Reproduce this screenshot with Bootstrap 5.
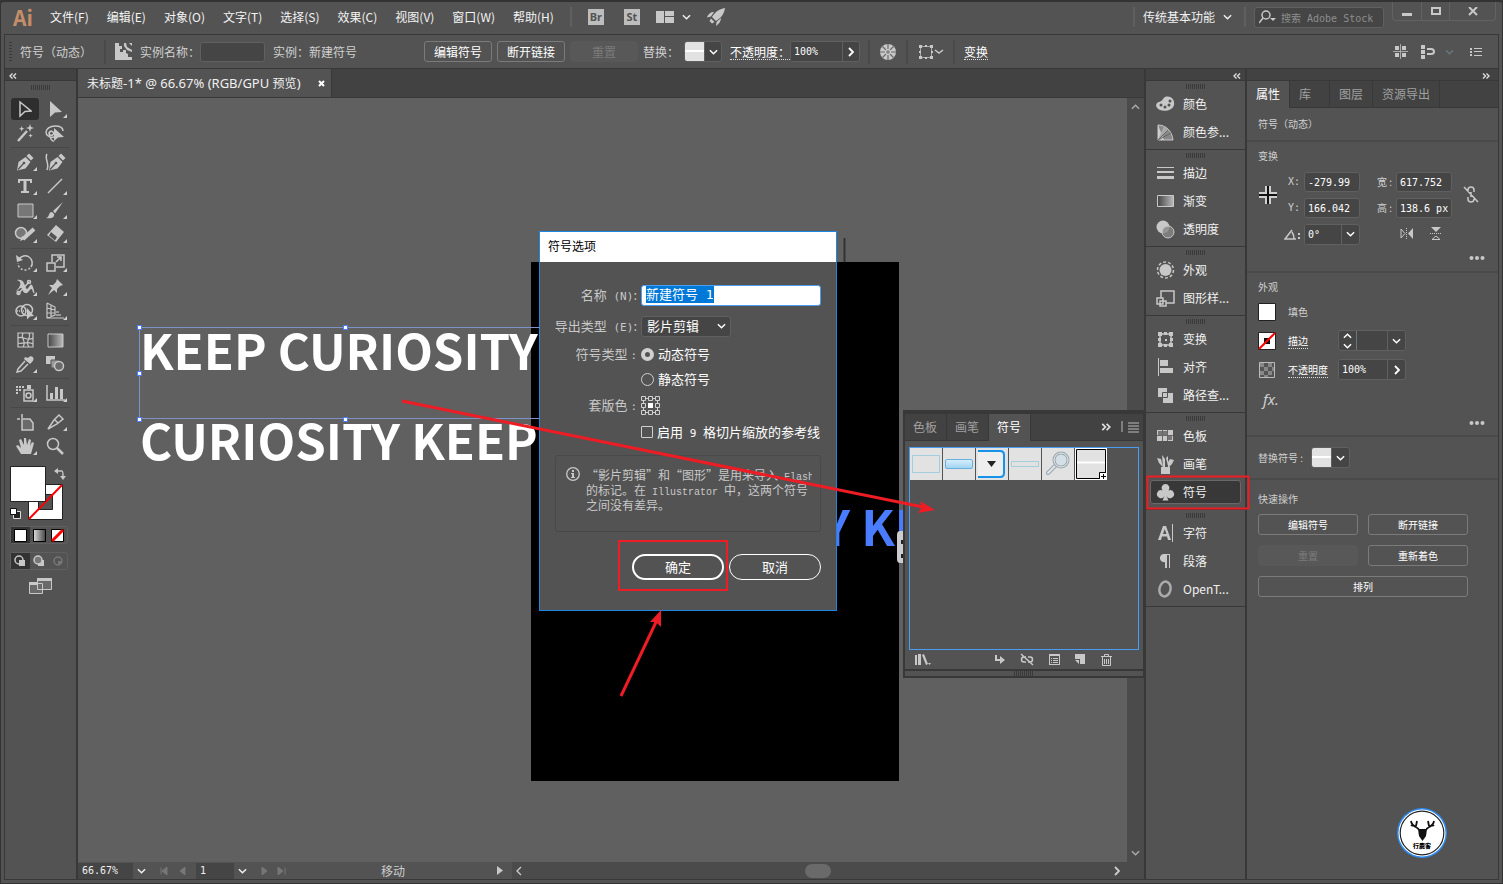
<!DOCTYPE html>
<html lang="zh-CN">
<head>
<meta charset="utf-8">
<meta name="viewport" content="width=device-width, initial-scale=1">
<title>未标题-1* @ 66.67% (RGB/GPU 预览)</title>
<link href="https://cdn.jsdelivr.net/npm/bootstrap@5.3.0/dist/css/bootstrap.min.css" rel="stylesheet">
<style>
:root{--ui:#535353;--dark:#424242;--line:#383838;--ico:#c8c8c8;--field:#454545;--edge:#606060;--red:#ee1c24}
body{font:12px/16px "Noto Sans CJK SC",sans-serif;color:#f0f0f0;background:var(--line);overflow:hidden}
button,input,select{font:inherit;color:inherit}
button{background:none;border:0;padding:0}
svg{display:block;flex:none}
.ic{fill:none;stroke:var(--ico);stroke-width:1.5}
.fi{fill:var(--ico);stroke:none}
.mono{font-family:"DejaVu Sans Mono",monospace;font-size:10px}
.half{font-family:"DejaVu Sans Mono",monospace;font-size:11px;line-height:0}
.half-s{font-family:"Liberation Mono",monospace;font-size:10px;line-height:0}
.lat{font-family:"Noto Sans",sans-serif;font-size:13px;line-height:0}
.app{min-height:100vh;background:var(--ui);border:1px solid #333;border-top-width:2px;border-radius:4px 4px 0 0}
.menubar{height:32px;padding:0 0 2px 12px}
.brand{color:#c58d68;font:bold 21px/28px "Noto Sans CJK SC",sans-serif;width:37px}
.menus{gap:18px}
.menus a{color:#f4f4f4;text-decoration:none}
.vsep{width:2px;height:20px;background:#5f5f5f}
.sqicon{width:16px;height:16px;background:#bdbdbd;color:#535353;font:bold 11px/16px "Noto Sans",sans-serif;text-align:center}
.search{width:130px;height:21px;background:var(--field);border:1px solid var(--edge);border-radius:3px;padding-left:4px}
.search input{width:100px;background:none;border:0;outline:0;padding:0}
.search input::placeholder{color:#8e8e8e;opacity:1;font-family:"DejaVu Sans Mono","Noto Sans CJK SC",monospace;font-size:10px}
.winbtns{border:1px solid #626262;border-top:0;border-radius:0 0 4px 4px;height:19px;margin-right:6px}
.winbtns button{width:28px;height:18px;display:grid;place-items:center}
.winbtns button+button{border-left:1px solid #626262}
.winbtns button:last-child{width:46px}
.frame{border:1px solid var(--line);margin:0 3px 3px 3px}
.ctrl{height:34px;border-bottom:1px solid var(--line);color:#d0d0d0;padding-left:4px}
.ctrl-name{width:92px}
.grip-v{width:3px;height:20px;background:repeating-linear-gradient(#3a3a3a 0 1px,transparent 1px 3px)}
.grip-h{width:20px;height:5px;background:repeating-linear-gradient(90deg,#3a3a3a 0 1px,transparent 1px 2px);margin:0 auto}
.fld{height:20px;background:var(--field);border:1px solid var(--edge);border-radius:3px;color:#fff;padding:0 3px;outline:0;min-width:0}
.obtn{height:21px;border:1px solid #7b7b7b;border-radius:3px;color:#fff;line-height:18px;text-align:center}
.obtn:disabled{border-color:#585858;background:#585858;color:#7a7a7a}
.ctrl .obtn{width:68px}
.ctrl-actions{gap:5px;margin-left:58px}
.combo{display:flex;align-items:center;border:1px solid var(--edge);border-radius:3px;background:var(--field);height:21px;overflow:hidden}
.combo .fld{border:0;border-radius:0;flex:1;height:19px}
.combo .arr{width:18px;height:19px;display:grid;place-items:center;border-left:1px solid var(--edge);flex:none}
.ctrl .combo .arr{width:17px}
.thumb{width:19px;height:19px;background:linear-gradient(#e2e2e2 8px,#fff 8px 10px,#e2e2e2 10px);flex:none}
.dotted{border-bottom:1px dotted #ddd;color:#fff;line-height:15px}
.seg{height:24px;display:flex;align-items:center;border-left:2px solid #4a4a4a;padding:0 9px}
.strip{height:12px;background:var(--dark);border-bottom:1px solid var(--line)}
.toolbox{width:73px;border-right:2px solid var(--line)}
.toolbox .grip-h{margin:4px auto 7px}
.tgrid{display:grid;grid-template-columns:30px 30px;grid-auto-rows:24px;justify-content:center;width:60px;margin:0 0 0 5px}
.tgrid+.tgrid{margin-top:5px;position:relative}
.tgrid+.tgrid::before{content:"";position:absolute;left:0;right:0;top:-3px;height:1px;background:#494949}
.tgrid button{display:grid;place-items:center;position:relative;border-radius:3px}
.tgrid .on{background:#2e2e2e;margin:1px}
.tgrid .sub::after{content:"";position:absolute;right:3px;bottom:3px;border:2px solid;border-color:transparent #d0d0d0 #d0d0d0 transparent}
.modes{width:58px;height:18px;margin-left:5px;border:1px solid #606060;border-radius:3px}
.modes button{flex:1;display:grid;place-items:center}
.modes .on{background:#333}
.doc{position:relative;min-width:0}
.doctabs{height:29px;background:var(--dark);border-bottom:1px solid var(--line)}
.doctab{width:254px;background:var(--ui);border-right:1px solid var(--line);padding:0 6px 0 9px}
.canvas{background:#606060;overflow:hidden}
.artboard{position:absolute;left:453px;top:193px;width:368px;height:519px;background:#000}
.headline{position:absolute;font:bold 49px/60px "Noto Sans CJK SC",sans-serif;color:#fff;white-space:nowrap}
.vbar{width:17px;background:#4b4b4b;padding:6px 4px;color:#aaa}
.status{height:17px;background:var(--ui)}
.status select{height:16px;background:var(--field);border:0;outline:0;appearance:none;padding:0 4px}
.overlay{position:absolute;left:0;top:0;width:100%;height:100%;pointer-events:none;z-index:9;overflow:visible}
.dlg{position:absolute;left:461px;top:162px;width:298px;background:var(--ui);border:1px solid #1c86e0;z-index:5;color:#c8c8c8;font-size:13px}
.dlg header{height:30px;background:#fff;color:#000;font-size:12px;padding:6px 8px}
.dgrid{display:grid;grid-template-columns:97px 1fr;column-gap:4px;grid-template-rows:30px 32px 24px 26px 26px 28px;align-items:center;padding:18px 15px 0 0}
.dgrid>.lab{text-align:right;grid-column:1}
.dgrid>.val{grid-column:2;color:#fff;display:flex;align-items:center;gap:4px}
.namebox{height:21px;width:100%;border:1px solid #4a9df0;border-radius:3px;background:#fff;color:#000;padding:0 4px 4px;outline:0;font:13px/15px "DejaVu Sans Mono","Noto Sans CJK SC",monospace}
.namebox::selection{background:#0078d7;color:#fff}
.dlg input[type=radio]{appearance:none;width:13px;height:13px;border:1px solid #d0d0d0;border-radius:50%;margin:0}
.dlg input[type=radio]:checked{background:#535353;border:4px solid #d0d0d0}
.dlg input[type=checkbox]{appearance:none;width:12px;height:12px;border:1px solid #d0d0d0;border-radius:1px;margin:0}
.dlg select{appearance:none;background:none;border:0;width:88px;padding:0 5px;height:19px;outline:0}
.info{margin:9px 15px 22px;border:1px solid #494949;border-radius:3px;height:77px;padding:11px 8px 0 10px;font-size:12px;line-height:15px;gap:6px}
.dlg-foot{padding:0 15px 30px 0;gap:5px}
.pill{width:92px;height:26px;border:1px solid #fff;border-radius:13px;color:#fff}
.pill.main{border-width:2px}
.floatp{position:absolute;right:-1px;top:341px;width:242px;height:268px;background:var(--ui);border:2px solid var(--line);border-top-width:4px;z-index:6}
.ptabs{height:27px;background:var(--dark);border-bottom:1px solid var(--line)}
.ptabs button{color:#a0a0a0;border-right:1px solid var(--line);padding:0 9px 0 8px}
.ptabs .on{background:var(--ui);color:#fff;height:27px}
.symbols{margin:6px 4px 0;height:203px;border:1px solid #4a9df0;gap:1px;align-items:flex-start}
.symbols button{width:32px;height:32px;background:#e2e2e2}
.floatp-foot{padding:0 31px 0 10px}
.dock{width:103px;border-left:2px solid var(--line);border-right:2px solid var(--line)}
.dgroup{border-bottom:1px solid var(--line);padding:3px 4px 3px 4px}
.dgroup button{display:flex;align-items:center;width:91px;height:28px;padding-left:6px;gap:8px;white-space:nowrap}
.dgroup .grip-h{margin-bottom:1px}
.dgroup .on{background:#383838;border:1px solid #686868;border-radius:3px;height:24px;margin:2px 0;padding-left:5px}
.props{width:251px;font-size:10px;color:#d0d0d0}
.props .ptabs{font-size:12px}
.props .ptabs button{padding:0 9px}
.props .ptabs .wide{padding-right:18px}
.sec{padding:6px 11px 0 11px;border-bottom:2px solid #4a4a4a}
.xform{display:grid;grid-template-columns:20px 18px 56px 28px 56px 30px;grid-auto-rows:20px;gap:6px 4px;align-items:center;justify-items:end}
.xform .fld,.xform .combo{width:56px}
.more{margin:12px 2px 0 auto}
.rows{display:grid;grid-template-columns:30px 50px 68px;grid-auto-rows:29px;align-items:center;margin-top:2px}
.rows a{justify-self:start;white-space:nowrap}
.fx{font:italic 15px "Noto Sans",sans-serif;padding-left:5px}
.more.low{margin-top:8px}
.qgrid{display:grid;grid-template-columns:100px 100px;gap:10px}
.qgrid .all{grid-column:span 2}
.avatar{position:absolute;right:55px;bottom:25px}
.flip{transform:rotate(180deg)}
</style>
</head>
<body>
<svg width="0" height="0" class="position-absolute" aria-hidden="true">
<symbol id="dn" viewBox="0 0 10 6"><path d="M1 1l4 4 4-4" fill="none" stroke="currentColor" stroke-width="1.6"/></symbol>
<symbol id="rt" viewBox="0 0 6 10"><path d="M1 1l4 4-4 4" fill="none" stroke="currentColor" stroke-width="1.8"/></symbol>
<symbol id="lt" viewBox="0 0 6 10"><path d="M5 1L1 5l4 4" fill="none" stroke="currentColor" stroke-width="1.3"/></symbol>
<symbol id="ll" viewBox="0 0 8 6"><path d="M3.500 .5L1 3l2.500 2.500M7 .5L4.500 3 7 5.500" fill="none" stroke="#ddd" stroke-width="1.4"/></symbol>
<symbol id="rr" viewBox="0 0 8 6"><path d="M1 .5L3.500 3 1 5.500M4.500 .5L7 3 4.500 5.500" fill="none" stroke="#ddd" stroke-width="1.4"/></symbol>
<symbol id="nib" viewBox="2 1 17 18"><path d="M2 18.500l1.500-8.500 7-5 5 5-5 6.500zM11.500 4l2.500-2.500 4.500 4.500L16 8.500z" fill="#c8c8c8"/><path d="M3 17.500l5.500-6" stroke="#535353" stroke-width="1.200"/><circle cx="9" cy="11" r="1.300" fill="#535353"/></symbol>
<symbol id="dots3" viewBox="0 0 16 4"><circle cx="2.500" cy="2" r="2"/><circle cx="8" cy="2" r="2"/><circle cx="13.500" cy="2" r="2"/></symbol>
</svg>
<div class="app d-flex flex-column position-relative">
<header class="menubar d-flex align-items-center">
  <div class="brand">Ai</div>
  <nav class="menus d-flex"><a href="#">文件(F)</a><a href="#">编辑(E)</a><a href="#">对象(O)</a><a href="#">文字(T)</a><a href="#">选择(S)</a><a href="#">效果(C)</a><a href="#">视图(V)</a><a href="#">窗口(W)</a><a href="#">帮助(H)</a></nav>
  <div class="d-flex align-items-center gap-3 ps-3">
    <span class="vsep"></span>
    <div class="d-flex align-items-center gap-3">
      <button class="sqicon">Br</button><button class="sqicon ms-1">St</button>
      <button class="d-flex align-items-center gap-2" aria-label="排列文档"><svg width="18" height="12"><path class="fi" d="M0 0h8v12H0zM9 0h9v5H9zM9 6h9v6H9z"/></svg><svg width="9" height="6"><use href="#dn"/></svg></button>
      <button aria-label="GPU"><svg width="18" height="18" viewBox="0 0 18 18"><path class="fi" d="M18 0C12 1 8 4 5 9l4 4c5-3 8-7 9-13zM7 4C4 4 1 6 0 9.500l4-1zM14 10c0 3-2 6-5 8l.5-4zM4 10.500l3.500 3.500L5 15.500 2.500 13z"/></svg></button>
    </div>
  </div>
  <div class="ms-auto d-flex align-items-center gap-2 h-100">
    <span class="vsep"></span>
    <button class="d-flex align-items-center gap-2">传统基本功能<svg width="9" height="6"><use href="#dn"/></svg></button>
    <span class="vsep ms-1"></span>
    <label class="search d-flex align-items-center gap-1"><svg width="18" height="14" viewBox="0 0 18 14"><circle class="ic" cx="7" cy="5" r="4"/><path class="ic" d="M4 8l-4 5"/><path class="fi" d="M11 8h6l-3 3z"/></svg><input type="text" placeholder="搜索 Adobe Stock" aria-label="搜索"></label>
    <div class="winbtns d-flex align-self-start"><button aria-label="最小化"><svg width="10" height="12"><path class="fi" d="M0 8h10v3H0z"/></svg></button><button aria-label="最大化"><svg width="10" height="8"><path fill="none" stroke="#c8c8c8" stroke-width="2" d="M1 1h8v6H1z"/></svg></button><button aria-label="关闭"><svg width="10" height="9"><path d="M1 0l8 8M9 0L1 8" stroke="#c8c8c8" stroke-width="2"/></svg></button></div>
  </div>
</header>
<div class="frame d-flex flex-column flex-grow-1">
<section class="ctrl d-flex align-items-center">
  <span class="grip-v"></span><span class="ctrl-name ps-2">符号（动态）</span>
  <div class="seg gap-2"><svg width="17" height="17" viewBox="0 0 17 17"><path class="fi" d="M0 0h4v3l3 0v3H5v3h3V7h3v3l2 1v3h4v3H0zM9 0h2l1 4 5 3v2l-5-2-3-4zM14 0h3v3z"/></svg>
  <label class="d-flex align-items-center">实例名称：<input class="fld" style="width:65px"></label><span>实例：新建符号</span></div>
  <div class="ctrl-actions d-flex align-items-center"><button class="obtn">编辑符号</button><button class="obtn">断开链接</button><button class="obtn" disabled>重置</button>
  <span>替换：</span><button class="combo text-white" aria-label="替换符号"><span class="thumb"></span><span class="arr"><svg width="9" height="6"><use href="#dn"/></svg></span></button></div>
  <div class="d-flex align-items-center px-2"><a href="#" class="dotted text-decoration-none">不透明度：</a><div class="combo" style="width:70px"><input class="fld mono" value="100%" aria-label="不透明度"><span class="arr text-white"><svg width="6" height="10"><use href="#rt"/></svg></span></div></div>
  <div class="seg"><svg width="18" height="18" viewBox="0 0 18 18"><circle cx="9" cy="9" r="8" fill="#c8c8c8"/><path d="M9 1v16M1 9h16M3.500 3.500l11 11M14.500 3.500l-11 11" stroke="#6a6a6a" stroke-width="1.200"/><circle cx="9" cy="9" r="2.500" fill="#888" stroke="#e0e0e0"/></svg></div>
  <div class="seg"><svg width="27" height="16" viewBox="0 0 27 16"><path d="M3.500 2.500h11v11h-11z" fill="none" stroke="#aaa"/><path class="fi" d="M2 1h3v3H2zM8 1h2v2H8zM13 1h3v3h-3zM2 7h2v2H2zM14 7h2v2h-2zM2 12h3v3H2zM8 13h2v2H8zM13 12h3v3h-3z"/><path d="M18 6l4 3 4-3" class="ic"/></svg></div>
  <div class="seg"><a href="#" class="dotted text-decoration-none">变换</a></div>
  <div class="ms-auto d-flex align-items-center gap-2 pe-3"><svg width="16" height="16"><path class="fi" d="M2 2h4v4H2zM9 2h4v4H9zM2 9h4v4H2zM9 9h4v4H9z"/><path d="M7.500 0v15M0 7.500h15" stroke="#aaa"/></svg><svg class="ms-1" width="16" height="16"><path class="fi" d="M0 1h4v4H0zM0 6h4v4H0zM0 11h4v4H0z"/><path d="M6 5h4a3 2.500 0 0 1 0 5H6" fill="none" stroke="#c8c8c8" stroke-width="2"/></svg><svg width="9" height="6" class="text-secondary"><use href="#dn"/></svg><svg class="ms-2" width="12" height="10"><path class="fi" d="M0 1h2v2H0zM0 4h2v2H0zM0 7h2v2H0zM4 1h8v1H4zM4 4h8v1H4zM4 8h8v1H4z"/></svg></div>
</section>
<div class="d-flex flex-grow-1">
<aside class="toolbox">
  <div class="strip ps-1 pt-1"><svg width="8" height="6"><use href="#ll"/></svg></div>
  <div class="grip-h"></div>
  <div class="tgrid">
    <button class="on" aria-label="选择"><svg width="13" height="18" viewBox="0 0 13 18"><path class="ic" d="M1 2l11 9-6 .5L1 16z"/></svg></button>
    <button class="sub" aria-label="直接选择"><svg width="13" height="18" viewBox="0 0 13 18"><path class="fi" d="M1 1l12 11-7 .5L1 17z"/></svg></button>
    <button aria-label="魔棒"><svg width="18" height="18" viewBox="0 0 18 18"><path d="M2 17L11 7" stroke="#c8c8c8" stroke-width="2.500"/><path class="fi" d="M13 3l1-3 1 3 3 1-3 1-1 3-1-3-3-1zM5 4l.7-2 .7 2 2 .7-2 .7-.7 2-.7-2-2-.7zM14 11l.6-1.600.6 1.600 1.600.6-1.600.6-.6 1.600-.6-1.600-1.600-.6z"/></svg></button>
    <button aria-label="套索"><svg width="20" height="18" viewBox="0 0 20 18"><path class="ic" d="M9 13c-5 1-8-2-8-5s4-6 9-6 8 2 8 5M7 7c-3 0-4 3-2 4s5-1 3-3-5 0-3 5 4 4 4 4"/><path class="fi" d="M9 4l10 9-6 .5-4 3.500z"/></svg></button>
  </div>
  <div class="tgrid">
    <button class="sub" aria-label="钢笔"><svg width="17" height="18"><use href="#nib"/></svg></button>
    <button aria-label="曲率"><svg width="21" height="18"><path class="ic" d="M2 1C-1 6 5 10 2 17"/><use href="#nib" x="4" width="17" height="18"/></svg></button>
    <button class="sub" aria-label="文字"><svg width="16" height="16"><path class="fi" d="M1 1h14v4h-2V3H9.500v10H12v2H4v-2h2.500V3H3v2H1z"/></svg></button>
    <button class="sub" aria-label="直线"><svg width="16" height="16"><path class="ic" d="M1 15L15 1"/></svg></button>
    <button class="sub" aria-label="矩形"><svg width="17" height="15"><path d="M1 1h15v13H1z" fill="#777" stroke="#c8c8c8"/></svg></button>
    <button class="sub" aria-label="画笔"><svg width="18" height="17"><path class="fi" d="M17 0L7 9l2 2.500zM6 10c-4 0-2 5-6 6 4 1 9 0 8-4z"/></svg></button>
    <button class="sub" aria-label="铅笔"><svg width="22" height="18"><circle cx="7" cy="8" r="5.500" fill="#777" stroke="#c8c8c8" stroke-width="1.500"/><path d="M9 14L20 4" stroke="#c8c8c8" stroke-width="4"/><path class="fi" d="M6 16l2-5 3 3z"/></svg></button>
    <button class="sub" aria-label="橡皮擦"><svg width="18" height="18"><path class="fi" d="M10 0l8 7-8 10-9-7z"/><path d="M5 7l6 5-2 3.500-6-5z" fill="#535353"/></svg></button>
  </div>
  <div class="tgrid">
    <button class="sub" aria-label="旋转"><svg width="18" height="18"><path class="ic" d="M3 5a7 7 0 0 1 12 8"/><path class="ic" stroke-dasharray="2 2" d="M14 14A7 7 0 0 1 2 9"/><path class="fi" d="M0 1l1 7 6-2z"/></svg></button>
    <button class="sub" aria-label="比例缩放"><svg width="19" height="18"><path class="ic" d="M1 9h8v8H1zM6 8V1h12v12H10M10 8l5-5M11 3h4v4"/></svg></button>
    <button class="sub" aria-label="宽度"><svg width="19" height="17"><path class="fi" d="M1 1c7-1 7 4 9 8s4-6 6-3 2 8 3 8c-3 1-2-5-4-4s-3 5-6 4-2-5-4-5-3 3-5 3c4-4 7-9 1-11z"/><path class="ic" d="M2 15l11-12"/><circle class="ic" cx="2.500" cy="14" r="1.500"/><circle class="ic" cx="13" cy="3" r="1.500"/></svg></button>
    <button class="sub" aria-label="图钉"><svg width="16" height="16"><path class="fi" d="M10 0l6 6-3 1-3 3v4L2 6h4l3-3zM5 9l2 2-6 5z"/></svg></button>
    <button class="sub" aria-label="形状生成器"><svg width="20" height="17"><circle class="ic" cx="6" cy="8" r="5"/><circle class="ic" cx="12" cy="7" r="5.500"/><path class="ic" stroke-dasharray="1 1" d="M2 8h12"/><path class="fi" d="M12 5l7 8-4 .5-3 3z"/></svg></button>
    <button class="sub" aria-label="透视网格"><svg width="19" height="18"><path fill="#999" d="M10 9h3v2h-3zM10 12h5v2h-5z"/><path d="M1 1v15h17M1 1l8 4v8l-8 3M5 3v12M1 6l8 2M1 11h8" fill="none" stroke="#c8c8c8" stroke-width="1.200"/></svg></button>
  </div>
  <div class="tgrid">
    <button aria-label="网格"><svg width="17" height="16"><path fill="none" stroke="#c8c8c8" stroke-width="1.200" d="M1 1h15v14H1zM1 6c5-3 9 4 15 0M1 11c5 2 9-3 15 1M6 1c-3 5 4 8 0 14M12 1c3 5-5 8 0 14"/></svg></button>
    <button aria-label="渐变"><svg width="17" height="15"><defs><linearGradient id="g1"><stop stop-color="#444"/><stop offset="1" stop-color="#bbb"/></linearGradient><linearGradient id="g2"><stop stop-color="#ddd"/><stop offset="1" stop-color="#444"/></linearGradient></defs><path fill="url(#g1)" stroke="#c8c8c8" d="M1 1h15v13H1z"/></svg></button>
    <button class="sub" aria-label="吸管"><svg width="18" height="18"><path class="fi" d="M12 3c3-4 8 0 4 4l-2 2-6-5 1-2z"/><path class="ic" d="M9 6l-7 8-1 3 4-1 7-7"/></svg></button>
    <button aria-label="混合"><svg width="19" height="16"><path class="fi" d="M0 0h9v8H0z"/><path d="M5 4h8v8H5z" fill="#999" stroke="#535353"/><circle cx="13" cy="10" r="4.500" fill="#6a6a6a" stroke="#c8c8c8" stroke-width="1.500"/></svg></button>
  </div>
  <div class="tgrid">
    <button class="sub" aria-label="符号喷枪"><svg width="20" height="17"><path class="fi" d="M1 1h2v2H1zM4 1h2v2H4zM7 1h2v2H7zM1 4h2v2H1zM4 4h2v2H4zM1 7h2v2H1zM12 0h4v4h-4z"/><path class="ic" d="M9 5h9v11H9z"/><circle class="ic" cx="13.500" cy="10.500" r="2.500"/></svg></button>
    <button class="sub" aria-label="柱形图"><svg width="19" height="16"><path class="ic" d="M1 0v15h18"/><path class="fi" d="M4 8h3v6H4zM9 2h3v12H9zM14 4h3v10h-3z"/></svg></button>
  </div>
  <div class="tgrid">
    <button aria-label="画板"><svg width="17" height="17"><path class="ic" d="M5 0v4M0 5h3"/><path d="M5 5h8l3 4v7H5z" fill="#6a6a6a" stroke="#c8c8c8" stroke-width="1.500"/></svg></button>
    <button class="sub" aria-label="切片"><svg width="18" height="18"><path class="ic" d="M2 16l6-9 5-5 4 4-6 5-9 5zM9 7l3 3"/></svg></button>
    <button class="sub" aria-label="抓手"><svg width="18" height="18"><path class="fi" d="M5 17L0 9l2-1 3 3L3 3l2-1 3 6V1h2l1 7 2-6 2 1-1 6 2-4 2 1-3 11z"/></svg></button>
    <button aria-label="缩放"><svg width="18" height="18"><circle class="ic" cx="7" cy="7" r="5.500"/><path d="M11 11l6 6" stroke="#c8c8c8" stroke-width="2.500"/></svg></button>
  </div>
  <svg class="ms-1 mt-2 mb-1" width="60" height="56" viewBox="0 0 60 56"><path fill="#fff" stroke="#222" d="M19.500 18.500h34v35h-34z"/><path fill="#535353" stroke="#222" d="M29.500 28.500h14v15h-14z"/><path d="M20 53L53 19" stroke="#f00" stroke-width="2"/><path fill="#fff" stroke="#222" d="M1.500 .5h35v35h-35z"/><path class="ic" d="M48 5h5q1 0 1 6"/><path class="fi" d="M45 5l4-3v6zM54 14l-3-4h6z"/><path fill="#222" stroke="#ddd" d="M4.500 45.500h7v7h-7z"/><path fill="#fff" stroke="#111" d="M1.500 42.500h6v6h-6z"/></svg>
  <div class="modes d-flex"><button class="on" aria-label="颜色"><svg width="13" height="13"><path fill="#fff" stroke="#000" d="M.5.500h12v12H.5z"/></svg></button><button aria-label="渐变"><svg width="13" height="13"><path fill="url(#g2)" stroke="#000" d="M.5.500h12v12H.5z"/></svg></button><button aria-label="无"><svg width="13" height="13"><path fill="#fff" stroke="#000" d="M.5.500h12v12H.5z"/><path d="M1 12L12 1" stroke="#f00" stroke-width="3"/></svg></button></div>
  <div class="modes d-flex mt-2 mb-2"><button class="on" aria-label="正常绘图"><svg width="12" height="12"><circle class="ic" cx="5" cy="5" r="4"/><path class="fi" d="M5 5h6v6H5z"/></svg></button><button aria-label="背面绘图"><svg width="12" height="12"><path class="fi" d="M5 5h6v6H5z"/><circle cx="5" cy="5" r="4" fill="#777" stroke="#c8c8c8" stroke-width="1.500"/></svg></button><button aria-label="内部绘图"><svg width="12" height="12"><circle cx="6" cy="6" r="4" fill="none" stroke="#777" stroke-width="1.500"/><path fill="#777" d="M6 6h3v3H6z"/></svg></button></div>
  <button class="d-block mx-auto" aria-label="屏幕模式"><svg width="23" height="16"><path fill="#6a6a6a" stroke="#c8c8c8" d="M.5 5.500h13v10H.5zM8.500 .5h14v11h-14z"/><path class="fi" d="M8 0h15v3H8zM0 4h8v3H0z"/></svg></button>
</aside>
<main class="doc flex-grow-1 d-flex flex-column">
  <div class="doctabs d-flex"><div class="doctab d-flex align-items-center justify-content-between"><span class="text-nowrap">未标题<span class="lat">-1* @ 66.67% (RGB/GPU </span>预览<span class="lat">)</span></span><button aria-label="关闭标签"><svg width="7" height="7"><path d="M1 1l5 5M6 1L1 6" stroke="#fff" stroke-width="2"/></svg></button></div></div>
  <div class="d-flex flex-grow-1"><div class="canvas flex-grow-1"></div><div class="vbar d-flex flex-column justify-content-between"><svg class="flip" width="9" height="6"><use href="#dn"/></svg><svg width="9" height="6"><use href="#dn"/></svg></div></div>
  <footer class="status d-flex align-items-center">
    <select class="mono" style="width:55px" aria-label="缩放比例"><option>66.67%</option></select><svg class="mx-1" width="9" height="6"><use href="#dn"/></svg>
    <svg class="mx-2" width="30" height="8"><path d="M3 .5v7M9 0v8L4 4zM27 0v8l-5-4z" fill="#777" stroke="#777"/></svg>
    <select class="mono" style="width:38px" aria-label="画板"><option>1</option></select><svg class="mx-1" width="9" height="6"><use href="#dn"/></svg>
    <svg class="mx-2" width="30" height="8"><path d="M3 0v8l5-4zM19 0v8l5-4zM26 .5v7" fill="#777" stroke="#777"/></svg>
    <span class="text-center" style="width:192px;color:#ccc">移动</span>
    <svg class="ms-2" width="7" height="9"><path class="fi" d="M0 0v9l6-4.500z"/></svg>
    <div class="d-flex align-items-center flex-grow-1 h-100 ms-2 ps-1 pe-4" style="background:#4b4b4b;color:#ccc"><svg width="6" height="10"><use href="#lt"/></svg><span class="rounded-pill mx-auto" style="width:26px;height:14px;background:#6a6a6a"></span><svg width="6" height="10"><use href="#rt"/></svg></div>
  </footer>

  <div class="artboard"></div>
  <div class="headline" style="left:62px;top:250px">KEEP CURIOSITY</div>
  <div class="headline" style="left:62px;top:340px">CURIOSITY KEEP</div>
  <div class="headline" style="left:512px;top:426px;color:#4a7cff">CURIOSITY KE</div>

  <section class="dlg" role="dialog" aria-label="符号选项">
    <header>符号选项</header>
    <div class="dgrid">
      <label class="lab" for="nm">名称<span class="half"> (N)</span>:</label><div class="val"><input class="namebox" id="nm" value="新建符号 1"></div>
      <label class="lab" for="ex">导出类型<span class="half"> (E)</span>:</label><div class="val"><div class="combo"><select id="ex"><option>影片剪辑</option></select><svg style="margin:0 4px 0 -13px" width="9" height="6"><use href="#dn"/></svg></div></div>
      <span class="lab">符号类型 <span class="half">:</span></span><label class="val"><input type="radio" name="st" checked>动态符号</label>
      <label class="val"><input type="radio" name="st">静态符号</label>
      <span class="lab">套版色 <span class="half">:</span></span><div class="val"><svg width="19" height="19"><g fill="none" stroke="#d0d0d0"><path d="M.5.500h4v4h-4zM7.500.500h4v4h-4zM14.500.500h4v4h-4zM.5 7.500h4v4h-4zM14.500 7.500h4v4h-4zM.5 14.500h4v4h-4zM7.500 14.500h4v4h-4zM14.500 14.500h4v4h-4zM5 2.500h2M12 2.500h2M5 16.500h2M12 16.500h2M2.500 5v2M2.500 12v2M16.500 5v2M16.500 12v2"/></g><path fill="#fff" d="M7 7h5v5H7z"/></svg></div>
      <label class="val"><input type="checkbox" class="flex-shrink-0"><span class="text-nowrap">启用<span class="half"> 9 </span>格切片缩放的参考线</span></label>
    </div>
    <div class="info d-flex"><svg width="14" height="14"><circle cx="7" cy="7" r="6.300" fill="none" stroke="#c8c8c8" stroke-width="1.300"/><path class="fi" d="M6 3h2v2H6zM5 6h3v4h1v1H5v-1h1V7H5z"/></svg><div class="text-nowrap overflow-hidden">“影片剪辑”和“图形”是用来导入<span class="half-s"> Flash</span><br>的标记。在<span class="half-s"> Illustrator </span>中，这两个符号<br>之间没有差异。</div></div>
    <div class="dlg-foot d-flex justify-content-end"><button class="pill main">确定</button><button class="pill">取消</button></div>
  </section>

  <section class="floatp d-flex flex-column">
    <div class="ptabs d-flex align-items-center"><button class="h-100">色板</button><button class="h-100">画笔</button><button class="on">符号</button><svg class="ms-auto me-2" width="10" height="8"><use href="#rr"/></svg><svg class="me-1" width="20" height="12"><path d="M3 0v11M9 2h11M9 5h11M9 8h11M9 11h11" stroke="#bbb"/></svg></div>
    <div class="symbols d-flex">
      <button aria-label="符号 1"><svg width="32" height="32"><path fill="none" stroke="#a5cde0" d="M2.500 7.500h27v17h-27z"/></svg></button>
      <button aria-label="符号 2"><svg width="32" height="32"><defs><linearGradient id="b" x2="0" y2="1"><stop stop-color="#d9f0fb"/><stop offset="1" stop-color="#9fd2f2"/></linearGradient></defs><rect x="2.500" y="11.500" width="27" height="9" rx="1.500" fill="url(#b)" stroke="#68b0dd"/></svg></button>
      <button aria-label="符号 3"><svg width="32" height="32"><path d="M2 3h22q4 0 4 4v18q0 4-4 4H2z" fill="#eee"/><path d="M2 3h22q4 0 4 4v18q0 4-4 4H2" fill="none" stroke="#1592ea" stroke-width="2"/><path fill="#222" d="M11 13h9l-4.500 6z"/></svg></button>
      <button aria-label="符号 4"><svg width="32" height="32"><path fill="none" stroke="#a5cde0" d="M2.500 13.500h27v5h-27z"/></svg></button>
      <button aria-label="符号 5"><svg width="32" height="32"><path d="M6 25l7-7" stroke="#9aa6ae" stroke-width="4" stroke-linecap="round"/><path d="M6 25l7-7" stroke="#dfe5e8" stroke-width="2" stroke-linecap="round"/><circle cx="19" cy="12" r="7" fill="#d4e0e8" stroke="#9aa6ae" stroke-width="3"/><circle cx="19" cy="12" r="7" fill="none" stroke="#e8edf0"/></svg></button>
      <button aria-label="新建符号"><svg width="32" height="32"><path fill="#fff" d="M0 0h32v32H0z"/><path fill="#e2e2e2" stroke="#000" d="M1.500 1.500h29v29h-29z"/><path d="M2 14.500h28" stroke="#fff" stroke-width="2"/><path fill="#fff" d="M24 25h8v7h-8z"/><path fill="none" stroke="#000" d="M24.500 31v-6.500H31"/><path d="M26 28.500h5M28.500 26v5" stroke="#000"/></svg></button>
    </div>
    <div class="floatp-foot d-flex align-items-center justify-content-between flex-grow-1">
      <svg width="16" height="12"><path class="fi" d="M0 1h2v10H0zM3 0h3v11H3zM7 1l2-1 4 10-2 1zM13 9h3l-1.500 2z"/></svg>
      <div class="d-flex align-items-center" style="gap:15px"><svg width="10" height="10"><path d="M1 0v5h6" fill="none" stroke="#c8c8c8" stroke-width="2"/><path class="fi" d="M5 1l5 4-5 4z"/></svg>
      <svg width="14" height="13"><path class="ic" d="M6 4H4a2.500 2.500 0 0 0 0 5h2M8 4h2a2.500 2.500 0 0 1 0 5H8M1 1l12 11"/></svg>
      <svg width="11" height="11"><path class="fi" d="M0 0h11v11H0z"/><path fill="#535353" d="M1 2h9v8H1z"/><path class="fi" d="M2 4h1v1H2zM4 4h5v1H4zM2 6h1v1H2zM4 6h5v1H4zM2 8h1v1H2zM4 8h5v1H4z"/></svg>
      <svg width="11" height="11"><path class="fi" d="M0 0h10v10H5V5H0zM0 6h4v4z"/></svg>
      <svg width="11" height="12"><path fill="none" stroke="#c8c8c8" d="M0 2.500h11M3.500 2V.5h4V2M1.500 3v8.500h8V3M3.500 5v5M5.500 5v5M7.500 5v5"/></svg></div>
    </div>
    <div style="height:7px;border-top:2px solid #383838"><div class="grip-h"></div></div>
  </section>

  <svg class="overlay">
    <path d="M61.500 258.500h400M61.500 349.500h400M61.500 258v92" fill="none" stroke="#7d93c8"/>
    <path d="M59.500 256.500h4v4h-4zM265.500 256.500h4v4h-4zM59.500 302.500h4v4h-4zM59.500 348.500h4v4h-4zM265.500 348.500h4v4h-4z" fill="#fff" stroke="#4a7cff"/>
    <path d="M766.500 169v24" stroke="#333" stroke-width="2"/>
    <path d="M825 462h-3q-3 0-3 4v24q0 4 3 4h3z" fill="#ccc"/><path d="M823 471h2v4h-2zM823 485h2v4h-2z" fill="#222"/>
    <g fill="none" stroke="#ee1c24" stroke-width="2"><path d="M541 472h108v49H541z"/><path stroke-width="3" d="M324 332L845 438M543 627l36-76"/></g>
    <path fill="#ee1c24" d="M857 441l-17 3 4-6-2-6zM583 541l-11 12 6 0 5 5z"/>
    <path d="M1069.500 407.500h101v32h-101z" fill="none" stroke="#ee1c24" stroke-width="2"/>
  </svg>
</main>
<aside class="dock">
  <div class="strip d-flex justify-content-end pe-1 pt-1"><svg width="8" height="6"><use href="#ll"/></svg></div>
  <div class="dgroup"><div class="grip-h"></div>
    <button><svg width="19" height="16"><path class="fi" d="M9 1c6-2 10 3 9 8s-9 7-14 5-5-7-1-8 3-3 6-5z"/><g fill="#535353"><circle cx="5" cy="9" r="1.500"/><circle cx="9" cy="11" r="1.500"/><circle cx="13" cy="9" r="1.500"/><circle cx="14" cy="5" r="1.500"/></g></svg>颜色</button>
    <button><svg width="19" height="17"><path d="M2 1c8 0 14 6 15 15H2z" fill="#888" stroke="#c8c8c8"/><path d="M2 1l6 15H2z" fill="#ccc"/><path d="M2 16L8 2l5 4z" fill="#aaa"/><path d="M2 16l10-10M2 16l13-7" stroke="#666"/></svg>颜色参...</button></div>
  <div class="dgroup"><div class="grip-h"></div>
    <button><svg width="19" height="14"><path class="fi" d="M1 1h17v1H1zM1 5h17v2H1zM1 10h17v3H1z"/></svg>描边</button>
    <button><svg width="19" height="13"><path fill="url(#g1)" stroke="#c8c8c8" d="M1.500.500h16v11h-16z"/></svg>渐变</button>
    <button><svg width="19" height="19"><circle cx="7" cy="7" r="6.500" fill="#c8c8c8"/><circle cx="12" cy="12" r="6" fill="#888" fill-opacity=".8" stroke="#c8c8c8"/></svg>透明度</button></div>
  <div class="dgroup"><div class="grip-h"></div>
    <button><svg width="19" height="18"><circle cx="9.500" cy="9" r="6" fill="#c8c8c8"/><circle class="ic" cx="9.500" cy="9" r="8" stroke-dasharray="3 2"/></svg>外观</button>
    <button><svg width="19" height="17"><path class="ic" d="M5 8V1h13v12H10M1 8h6v6H1zM4 11h6v5H4z"/></svg>图形样...</button></div>
  <div class="dgroup"><div class="grip-h"></div>
    <button><svg width="19" height="17"><path class="ic" d="M4 3h11v11H4z"/><path class="fi" d="M2 1h4v4H2zM8 1h3v3H8zM13 1h4v4h-4zM2 7h3v3H2zM14 7h3v3h-3zM2 12h4v4H2zM8 13h3v3H8zM13 12h4v4h-4zM9 8h2v2H9z"/></svg>变换</button>
    <button><svg width="19" height="18"><path class="fi" d="M2 0h1v18H2zM4 2h8v6H4zM4 10h13v5H4z"/></svg>对齐</button>
    <button><svg width="19" height="17"><path class="fi" d="M2 1h9v9H2zM7 6h10v10H7z"/><path d="M6.500 5.500h5v5h-5z" fill="#c8c8c8" stroke="#535353"/></svg>路径查...</button></div>
  <div class="dgroup"><div class="grip-h"></div>
    <button><svg width="19" height="12"><path class="fi" d="M1 0h16v11H1z"/><path fill="#777" d="M2 1h4v4H2zM7 1h4v4H7zM12 6h4v4h-4z"/><path d="M1 5.500h16M6.500 0v11M11.500 0v11" stroke="#666"/></svg>色板</button>
    <button><svg width="19" height="19"><path class="fi" d="M5 12h9v7H5zM6 0l3 4v8H7zM1 3l4 1 2 8-4-4zM12 12V7l2-3 4 1-2 4-3 3zM10 3l2-2v10z"/></svg>画笔</button>
    <button class="on"><svg width="19" height="17"><path class="fi" d="M9.500 0a4 4 0 0 1 3 6.500a4 4 0 1 1-2 5.500l2 4.500h-6l2-4.500a4 4 0 1 1-2-5.500A4 4 0 0 1 9.500 0z"/></svg>符号</button></div>
  <div class="dgroup"><div class="grip-h"></div>
    <button><svg width="19" height="18"><path class="fi" d="M2 16L7 2h3l5 14h-3l-1-3.500H6L5 16zM7 10h3.500L8.700 5zM16 0h1v18h-1z"/></svg>字符</button>
    <button><svg width="19" height="16"><path class="fi" d="M7 1h7v14h-1V2h-2v13h-2V9a4 4 0 0 1-2-8z"/></svg>段落</button>
    <button><svg width="19" height="18"><ellipse cx="9" cy="9" rx="5.500" ry="7.500" transform="rotate(12 9 9)" fill="none" stroke="#aaa" stroke-width="2.500"/></svg>OpenT...</button></div>
</aside>
<aside class="props">
  <div class="strip d-flex justify-content-end pe-2 pt-1"><svg width="8" height="6"><use href="#rr"/></svg></div>
  <div class="ptabs d-flex align-items-center"><button class="on">属性</button><button class="h-100 wide">库</button><button class="h-100">图层</button><button class="h-100">资源导出</button></div>
  <div class="sec d-flex align-items-center pt-0" style="height:34px">符号（动态）</div>
  <div class="sec" style="height:131px">变换
    <div class="xform mt-2">
      <svg style="grid-row:1/3" width="20" height="20"><path d="M10 1v18M1 10h18" stroke="#111" stroke-width="2"/><path d="M1 8h7V1M12 1v7h7M19 12h-7v7M8 19v-7H1" fill="none" stroke="#d0d0d0" stroke-width="2"/></svg>
      <label class="mono" for="px">X:</label><input id="px" class="fld mono" value="-279.99"><label for="pw">宽 :</label><input id="pw" class="fld mono" value="617.752">
      <svg style="grid-row:1/3;grid-column:6" class="mx-auto" width="16" height="18"><path class="ic" d="M5 6V4a3 3 0 0 1 6 0v2M5 11v2a3 3 0 0 0 6 0v-2M8 6v5M1 1l14 15"/></svg>
      <label class="mono" for="py" style="grid-column:2">Y:</label><input id="py" class="fld mono" value="166.042"><label for="ph">高 :</label><input id="ph" class="fld mono" value="138.6 px">
      <label for="pa" style="grid-column:2" aria-label="角度"><svg width="16" height="11"><path class="ic" d="M8 1L1 10h11M8 3q2 3 2 7"/><path class="fi" d="M14 4h2v2h-2zM14 8h2v2h-2z"/></svg></label>
      <div class="combo"><input id="pa" class="fld mono" value="0°"><span class="arr text-white"><svg width="9" height="6"><use href="#dn"/></svg></span></div>
      <div class="d-flex gap-3 align-items-center ps-1" style="grid-column:5/7;justify-self:start"><svg width="14" height="12"><path fill="none" stroke="#c8c8c8" d="M1 1v9l4-4.500z"/><path class="fi" d="M13 0v11L8 5.500z"/><path d="M6.500 0v12" stroke="#c8c8c8" stroke-dasharray="1 1"/></svg><svg width="12" height="14"><path class="fi" d="M1 0h10L6 5z"/><path d="M0 6.500h12" stroke="#c8c8c8" stroke-dasharray="1 1"/><path fill="none" stroke="#c8c8c8" d="M2 12.500h8L6 9z"/></svg></div>
    </div>
    <svg class="fi more" width="16" height="4"><use href="#dots3"/></svg>
  </div>
  <div class="sec" style="height:164px">外观
    <div class="rows">
      <svg width="18" height="18"><path fill="#fff" stroke="#222" d="M.5.500h17v17H.5z"/></svg><span>填色</span><span></span>
      <svg width="18" height="18"><path fill="#fff" stroke="#222" d="M.5.500h17v17H.5z"/><path fill="#535353" stroke="#111" stroke-width="2" d="M7 7h4v4H7z"/><path d="M1 17L17 1" stroke="#f00" stroke-width="2"/></svg><a href="#" class="dotted text-decoration-none">描边</a>
      <div class="combo text-white"><span class="d-grid gap-1 px-1"><svg class="flip" width="9" height="6"><use href="#dn"/></svg><svg width="9" height="6"><use href="#dn"/></svg></span><input class="fld border-start border-secondary" aria-label="描边粗细"><span class="arr"><svg width="9" height="6"><use href="#dn"/></svg></span></div>
      <svg width="18" height="18"><path fill="#555" stroke="#bbb" d="M1.500 1.500h15v15h-15z"/><path fill="#888" d="M2 2h4v4H2zM10 2h4v4h-4zM6 6h4v4H6zM14 6h2v4h-2zM2 10h4v4H2zM10 10h4v4h-4zM6 14h4v2H6z"/></svg><a href="#" class="dotted text-decoration-none">不透明度</a>
      <div class="combo text-white"><input class="fld mono" value="100%" aria-label="不透明度"><span class="arr"><svg width="6" height="10"><use href="#rt"/></svg></span></div>
      <span class="fx">fx.</span>
    </div>
    <svg class="fi more low" width="16" height="4"><use href="#dots3"/></svg>
  </div>
  <div class="sec d-flex align-items-center pt-0" style="height:43px"><span style="width:53px">替换符号 :</span><button class="combo text-white" aria-label="替换符号"><span class="thumb"></span><span class="arr"><svg width="9" height="6"><use href="#dn"/></svg></span></button></div>
  <div class="sec border-0" style="padding-top:11px">快速操作
    <div class="qgrid" style="margin-top:7px"><button class="obtn">编辑符号</button><button class="obtn">断开链接</button><button class="obtn" disabled>重置</button><button class="obtn">重新着色</button><button class="obtn all">排列</button></div>
  </div>
</aside>
</div>
</div>
<svg class="avatar" width="50" height="50" viewBox="0 0 50 50"><circle cx="25" cy="25" r="25" fill="#2d8cf0"/><circle cx="25" cy="25" r="23.500" fill="#fff"/><circle cx="25" cy="25" r="21.800" fill="none" stroke="#222" stroke-width="1.200"/><path d="M21 21h9l-1 7-3.500 5-3.500-5z" fill="#111"/><path d="M22 22c-1-4-7-2-8-9M18 18c-2-1-3 0-4-1M19 18l1-5M29 22c1-4 7-2 8-9M33 18c2-1 3 0 4-1M32 18l-1-5" fill="none" stroke="#111" stroke-width="1.800"/><text x="25" y="40" text-anchor="middle" font-size="6" font-weight="900" font-family="Noto Sans CJK SC,sans-serif">行鹿客</text></svg>
</div>
<script src="https://cdn.jsdelivr.net/npm/bootstrap@5.3.0/dist/js/bootstrap.bundle.min.js"></script>
<script>
// The dialog opens with its name selected, ready to be typed over
const nameBox = document.getElementById('nm');
nameBox.focus();
nameBox.select();
</script>
</body>
</html>
